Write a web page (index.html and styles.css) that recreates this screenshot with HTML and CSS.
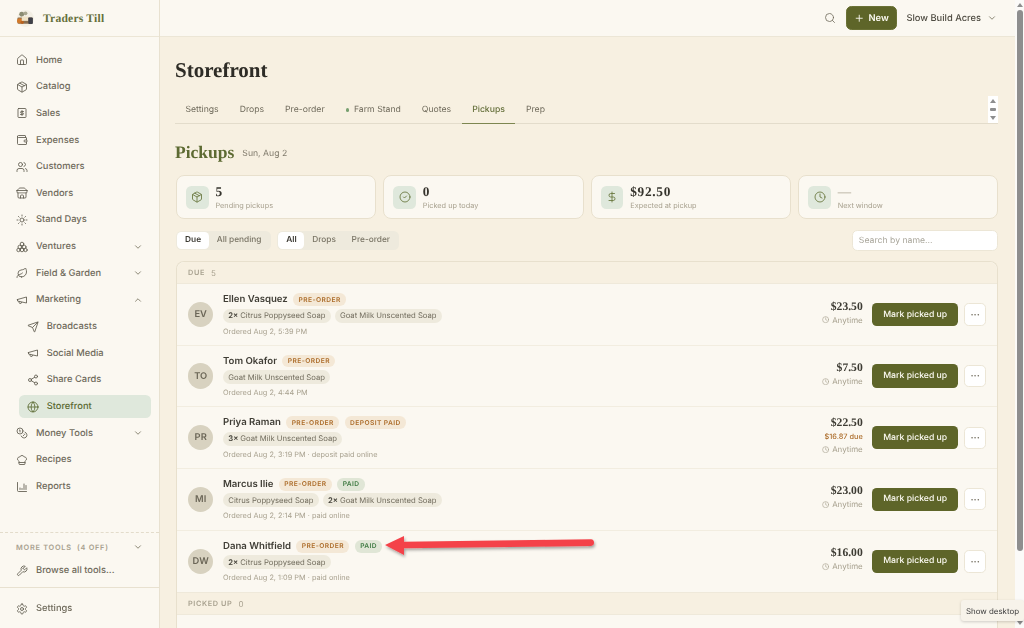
FILE: index.html
```html
<!DOCTYPE html>
<html lang="en">
<head>
<meta charset="utf-8">
<title>Storefront Pickups</title>
<link rel="stylesheet" href="styles.css">
</head>
<body>
<svg class="sprite" xmlns="http://www.w3.org/2000/svg">
<symbol id="i-home" viewBox="0 0 24 24"><path d="M15 21v-8a1 1 0 0 0-1-1h-4a1 1 0 0 0-1 1v8"/><path d="M3 10a2 2 0 0 1 .709-1.528l7-5.999a2 2 0 0 1 2.582 0l7 5.999A2 2 0 0 1 21 10v9a2 2 0 0 1-2 2H5a2 2 0 0 1-2-2z"/></symbol>
<symbol id="i-package" viewBox="0 0 24 24"><path d="M11 21.730a2 2 0 0 0 2 0l7-4A2 2 0 0 0 21 16V8a2 2 0 0 0-1-1.730l-7-4a2 2 0 0 0-2 0l-7 4A2 2 0 0 0 3 8v8a2 2 0 0 0 1 1.730z"/><path d="M12 22V12"/><path d="m3.300 7 8.700 5 8.700-5"/><path d="m7.500 4.270 9 5.150"/></symbol>
<symbol id="i-sales" viewBox="0 0 24 24"><rect x="4" y="3" width="16" height="18" rx="1.500"/><path d="M12 7v10"/><path d="M15 9h-4.500a1.500 1.500 0 0 0 0 3h3a1.500 1.500 0 0 1 0 3H9"/></symbol>
<symbol id="i-wallet" viewBox="0 0 24 24"><path d="M19 7V4a1 1 0 0 0-1-1H5a2 2 0 0 0 0 4h15a1 1 0 0 1 1 1v4h-3a2 2 0 0 0 0 4h3a1 1 0 0 0 1-1v-2a1 1 0 0 0-1-1"/><path d="M3 5v14a2 2 0 0 0 2 2h15a1 1 0 0 0 1-1v-4"/></symbol>
<symbol id="i-users" viewBox="0 0 24 24"><path d="M16 21v-2a4 4 0 0 0-4-4H6a4 4 0 0 0-4 4v2"/><circle cx="9" cy="7" r="4"/><path d="M22 21v-2a4 4 0 0 0-3-3.870"/><path d="M16 3.130a4 4 0 0 1 0 7.750"/></symbol>
<symbol id="i-store" viewBox="0 0 24 24"><path d="m2 7 4.410-4.410A2 2 0 0 1 7.830 2h8.340a2 2 0 0 1 1.420.59L22 7"/><path d="M4 12v8a2 2 0 0 0 2 2h12a2 2 0 0 0 2-2v-8"/><path d="M15 22v-4a2 2 0 0 0-2-2h-2a2 2 0 0 0-2 2v4"/><path d="M2 7h20"/><path d="M22 7v3a2 2 0 0 1-2 2 2.700 2.700 0 0 1-1.590-.63.7.7 0 0 0-.82 0A2.700 2.700 0 0 1 16 12a2.700 2.700 0 0 1-1.590-.63.7.7 0 0 0-.82 0A2.700 2.700 0 0 1 12 12a2.700 2.700 0 0 1-1.590-.63.7.7 0 0 0-.82 0A2.700 2.700 0 0 1 8 12a2.700 2.700 0 0 1-1.590-.63.7.7 0 0 0-.82 0A2.700 2.700 0 0 1 4 12a2 2 0 0 1-2-2V7"/></symbol>
<symbol id="i-sun" viewBox="0 0 24 24"><circle cx="12" cy="12" r="4"/><path d="M12 2v2M12 20v2M4.930 4.930l1.410 1.410M17.660 17.660l1.410 1.410M2 12h2M20 12h2M6.340 17.660l-1.410 1.410M19.070 4.930l-1.410 1.410"/></symbol>
<symbol id="i-grapes" viewBox="0 0 24 24"><circle cx="12" cy="6" r="3.600"/><circle cx="7.500" cy="12" r="3.600"/><circle cx="16.500" cy="12" r="3.600"/><circle cx="5" cy="18" r="3.400"/><circle cx="12" cy="18" r="3.600"/><circle cx="19" cy="18" r="3.400"/></symbol>
<symbol id="i-leaf" viewBox="0 0 24 24"><path d="M11 20A7 7 0 0 1 9.800 6.100C15.500 5 17 4.480 19 2c1 2 2 4.180 2 8 0 5.500-4.780 10-10 10Z"/><path d="M2 21c0-3 1.850-5.360 5.080-6C9.500 14.520 12 13 13 12"/></symbol>
<symbol id="i-mega" viewBox="0 0 24 24"><path d="m3 11 18-5v12L3 14v-3z"/><path d="M11.600 16.800a3 3 0 1 1-5.800-1.600"/></symbol>
<symbol id="i-send" viewBox="0 0 24 24"><path d="M14.536 21.686a.5.5 0 0 0 .937-.024l6.500-19a.496.496 0 0 0-.635-.635l-19 6.500a.5.5 0 0 0-.024.937l7.930 3.180a2 2 0 0 1 1.112 1.110z"/><path d="m21.854 2.147-10.940 10.939"/></symbol>
<symbol id="i-share" viewBox="0 0 24 24"><circle cx="18" cy="5" r="3"/><circle cx="6" cy="12" r="3"/><circle cx="18" cy="19" r="3"/><path d="m8.590 13.510 6.830 3.980M15.410 6.510l-6.820 3.980"/></symbol>
<symbol id="i-globe" viewBox="0 0 24 24"><circle cx="12" cy="12" r="10"/><path d="M12 2a14.500 14.500 0 0 0 0 20 14.500 14.500 0 0 0 0-20"/><path d="M2 12h20"/></symbol>
<symbol id="i-coins" viewBox="0 0 24 24"><circle cx="8" cy="8" r="6"/><path d="M18.090 10.370A6 6 0 1 1 10.340 18"/><path d="M7 6h1v4"/><path d="m16.710 13.880.7.710-2.820 2.820"/></symbol>
<symbol id="i-chef" viewBox="0 0 24 24"><path d="M17 21a1 1 0 0 0 1-1v-5.350c0-.457.316-.844.727-1.041a4 4 0 0 0-2.134-7.589 5 5 0 0 0-9.186 0 4 4 0 0 0-2.134 7.588c.411.198.727.585.727 1.041V20a1 1 0 0 0 1 1Z"/><path d="M6 17h12"/></symbol>
<symbol id="i-chart" viewBox="0 0 24 24"><path d="M3 3v16a2 2 0 0 0 2 2h16"/><path d="M8 17v-3M12 17v-2M16 17V6M20 17V9"/></symbol>
<symbol id="i-wrench" viewBox="0 0 24 24"><path d="M14.700 6.300a1 1 0 0 0 0 1.400l1.600 1.600a1 1 0 0 0 1.400 0l3.770-3.770a6 6 0 0 1-7.940 7.940l-6.910 6.910a2.120 2.120 0 0 1-3-3l6.910-6.910a6 6 0 0 1 7.940-7.940l-3.760 3.760z"/></symbol>
<symbol id="i-gear" viewBox="0 0 24 24"><path d="M12.220 2h-.44a2 2 0 0 0-2 2v.18a2 2 0 0 1-1 1.730l-.43.25a2 2 0 0 1-2 0l-.15-.08a2 2 0 0 0-2.730.73l-.22.38a2 2 0 0 0 .73 2.730l.15.1a2 2 0 0 1 1 1.720v.51a2 2 0 0 1-1 1.740l-.15.09a2 2 0 0 0-.73 2.730l.22.38a2 2 0 0 0 2.730.73l.15-.08a2 2 0 0 1 2 0l.43.25a2 2 0 0 1 1 1.730V20a2 2 0 0 0 2 2h.44a2 2 0 0 0 2-2v-.18a2 2 0 0 1 1-1.730l.43-.25a2 2 0 0 1 2 0l.15.08a2 2 0 0 0 2.730-.73l.22-.39a2 2 0 0 0-.73-2.730l-.15-.08a2 2 0 0 1-1-1.740v-.5a2 2 0 0 1 1-1.740l.15-.09a2 2 0 0 0 .73-2.730l-.22-.38a2 2 0 0 0-2.730-.73l-.15.08a2 2 0 0 1-2 0l-.43-.25a2 2 0 0 1-1-1.730V4a2 2 0 0 0-2-2z"/><circle cx="12" cy="12" r="3"/></symbol>
<symbol id="i-check" viewBox="0 0 24 24"><circle cx="12" cy="12" r="10"/><path d="m9 12 2 2 4-4"/></symbol>
<symbol id="i-clock" viewBox="0 0 24 24"><circle cx="12" cy="12" r="10"/><path d="M12 6v6l4 2"/></symbol>
<symbol id="i-dollar" viewBox="0 0 24 24"><path d="M12 2v20"/><path d="M17 5H9.500a3.500 3.500 0 0 0 0 7h5a3.500 3.500 0 0 1 0 7H6"/></symbol>
<symbol id="i-search" viewBox="0 0 24 24"><circle cx="11" cy="11" r="8"/><path d="m21 21-4.300-4.300"/></symbol>
<symbol id="i-down" viewBox="0 0 24 24"><path d="m6 9 6 6 6-6"/></symbol>
<symbol id="i-up" viewBox="0 0 24 24"><path d="m18 15-6-6-6 6"/></symbol>
<symbol id="i-plus" viewBox="0 0 24 24"><path d="M5 12h14M12 5v14"/></symbol>
</svg>

<div class="app">
  <aside class="sidebar">
    <div class="brand">
      <svg class="brand-logo" viewBox="0 0 20 18" aria-hidden="true">
        <circle cx="10" cy="9" r="9" fill="#f3efe4"/>
        <circle cx="6" cy="4.500" r="2.600" fill="#8b8c72"/>
        <circle cx="10" cy="3.500" r="2" fill="#a8a68e"/>
        <rect x="1.500" y="8" width="16" height="6.500" rx="1" fill="#8a6f50"/>
        <circle cx="3.800" cy="11.500" r="2.800" fill="#d27a2c"/>
        <circle cx="6.500" cy="13" r="1.800" fill="#b9621f"/>
        <rect x="6" y="7" width="7" height="4.500" fill="#f0e3c6"/>
        <rect x="13" y="8" width="4.800" height="6.800" rx="1" fill="#3f4049"/>
      </svg>
      <span class="brand-name">Traders Till</span>
    </div>
    <nav class="nav">
      <a class="nav-item"><svg class="ic"><use href="#i-home"/></svg>Home</a>
      <a class="nav-item"><svg class="ic"><use href="#i-package"/></svg>Catalog</a>
      <a class="nav-item"><svg class="ic"><use href="#i-sales"/></svg>Sales</a>
      <a class="nav-item"><svg class="ic"><use href="#i-wallet"/></svg>Expenses</a>
      <a class="nav-item"><svg class="ic"><use href="#i-users"/></svg>Customers</a>
      <a class="nav-item"><svg class="ic"><use href="#i-store"/></svg>Vendors</a>
      <a class="nav-item"><svg class="ic"><use href="#i-sun"/></svg>Stand Days</a>
      <a class="nav-item"><svg class="ic"><use href="#i-grapes"/></svg>Ventures<svg class="chev"><use href="#i-down"/></svg></a>
      <a class="nav-item"><svg class="ic"><use href="#i-leaf"/></svg>Field &amp; Garden<svg class="chev"><use href="#i-down"/></svg></a>
      <a class="nav-item"><svg class="ic"><use href="#i-mega"/></svg>Marketing<svg class="chev"><use href="#i-up"/></svg></a>
      <a class="nav-item sub"><svg class="ic"><use href="#i-send"/></svg>Broadcasts</a>
      <a class="nav-item sub"><svg class="ic"><use href="#i-mega"/></svg>Social Media</a>
      <a class="nav-item sub"><svg class="ic"><use href="#i-share"/></svg>Share Cards</a>
      <a class="nav-item sub active"><svg class="ic"><use href="#i-globe"/></svg>Storefront</a>
      <a class="nav-item"><svg class="ic"><use href="#i-coins"/></svg>Money Tools<svg class="chev"><use href="#i-down"/></svg></a>
      <a class="nav-item"><svg class="ic"><use href="#i-chef"/></svg>Recipes</a>
      <a class="nav-item"><svg class="ic"><use href="#i-chart"/></svg>Reports</a>
    </nav>
    <div class="more">
      <div class="more-head"><span>MORE TOOLS&nbsp; (4 OFF)</span><svg class="chev"><use href="#i-down"/></svg></div>
      <a class="nav-item"><svg class="ic"><use href="#i-wrench"/></svg>Browse all tools...</a>
    </div>
    <div class="side-foot">
      <a class="nav-item"><svg class="ic"><use href="#i-gear"/></svg>Settings</a>
    </div>
  </aside>

  <div class="column">
    <header class="topbar">
      <svg class="ic search-ic"><use href="#i-search"/></svg>
      <button class="new-btn"><svg class="plus"><use href="#i-plus"/></svg>New</button>
      <div class="org">Slow Build Acres<svg class="chev"><use href="#i-down"/></svg></div>
    </header>
    <main class="main">
      <h1 class="title">Storefront</h1>
      <div class="tabs">
        <a class="tab">Settings</a>
        <a class="tab">Drops</a>
        <a class="tab">Pre-order</a>
        <a class="tab"><i class="dot"></i>Farm Stand</a>
        <a class="tab">Quotes</a>
        <a class="tab active">Pickups</a>
        <a class="tab">Prep</a>
        <div class="mini-scroll"><i class="tri-up"></i><i class="dash"></i><i class="tri-down"></i></div>
      </div>
      <div class="section-head"><h2>Pickups</h2><span>Sun, Aug 2</span></div>
      <div class="stats">
        <div class="stat"><div class="stat-ic"><svg><use href="#i-package"/></svg></div><div><div class="stat-val">5</div><div class="stat-lab">Pending pickups</div></div></div>
        <div class="stat"><div class="stat-ic"><svg><use href="#i-check"/></svg></div><div><div class="stat-val">0</div><div class="stat-lab">Picked up today</div></div></div>
        <div class="stat"><div class="stat-ic"><svg><use href="#i-dollar"/></svg></div><div><div class="stat-val">$92.50</div><div class="stat-lab">Expected at pickup</div></div></div>
        <div class="stat"><div class="stat-ic"><svg><use href="#i-clock"/></svg></div><div><div class="stat-val muted">—</div><div class="stat-lab">Next window</div></div></div>
      </div>
      <div class="filters">
        <div class="seg"><span class="on">Due</span><span>All pending</span></div>
        <div class="seg"><span class="on">All</span><span>Drops</span><span>Pre-order</span></div>
        <input class="search" type="text" placeholder="Search by name...">
      </div>
      <section class="list">
        <div class="list-head"><b>DUE</b><span>5</span></div>

        <article class="row">
          <div class="avatar">EV</div>
          <div class="info">
            <div class="line1"><span class="name">Ellen Vasquez</span><span class="pill pre">PRE-ORDER</span></div>
            <div class="chips"><span class="chip"><b>2×</b> Citrus Poppyseed Soap</span><span class="chip">Goat Milk Unscented Soap</span></div>
            <div class="meta">Ordered Aug 2, 5:39 PM</div>
          </div>
          <div class="price"><div class="amt">$23.50</div><div class="when"><svg><use href="#i-clock"/></svg>Anytime</div></div>
          <button class="mark">Mark picked up</button>
          <button class="more-btn">···</button>
        </article>

        <article class="row">
          <div class="avatar">TO</div>
          <div class="info">
            <div class="line1"><span class="name">Tom Okafor</span><span class="pill pre">PRE-ORDER</span></div>
            <div class="chips"><span class="chip">Goat Milk Unscented Soap</span></div>
            <div class="meta">Ordered Aug 2, 4:44 PM</div>
          </div>
          <div class="price"><div class="amt">$7.50</div><div class="when"><svg><use href="#i-clock"/></svg>Anytime</div></div>
          <button class="mark">Mark picked up</button>
          <button class="more-btn">···</button>
        </article>

        <article class="row">
          <div class="avatar">PR</div>
          <div class="info">
            <div class="line1"><span class="name">Priya Raman</span><span class="pill pre">PRE-ORDER</span><span class="pill pre">DEPOSIT PAID</span></div>
            <div class="chips"><span class="chip"><b>3×</b> Goat Milk Unscented Soap</span></div>
            <div class="meta">Ordered Aug 2, 3:19 PM · deposit paid online</div>
          </div>
          <div class="price"><div class="amt">$22.50</div><div class="due">$16.87 due</div><div class="when"><svg><use href="#i-clock"/></svg>Anytime</div></div>
          <button class="mark">Mark picked up</button>
          <button class="more-btn">···</button>
        </article>

        <article class="row">
          <div class="avatar">MI</div>
          <div class="info">
            <div class="line1"><span class="name">Marcus Ilie</span><span class="pill pre">PRE-ORDER</span><span class="pill paid">PAID</span></div>
            <div class="chips"><span class="chip">Citrus Poppyseed Soap</span><span class="chip"><b>2×</b> Goat Milk Unscented Soap</span></div>
            <div class="meta">Ordered Aug 2, 2:14 PM · paid online</div>
          </div>
          <div class="price"><div class="amt">$23.00</div><div class="when"><svg><use href="#i-clock"/></svg>Anytime</div></div>
          <button class="mark">Mark picked up</button>
          <button class="more-btn">···</button>
        </article>

        <article class="row">
          <div class="avatar">DW</div>
          <div class="info">
            <div class="line1"><span class="name">Dana Whitfield</span><span class="pill pre">PRE-ORDER</span><span class="pill paid">PAID</span></div>
            <div class="chips"><span class="chip"><b>2×</b> Citrus Poppyseed Soap</span></div>
            <div class="meta">Ordered Aug 2, 1:09 PM · paid online</div>
          </div>
          <div class="price"><div class="amt">$16.00</div><div class="when"><svg><use href="#i-clock"/></svg>Anytime</div></div>
          <button class="mark">Mark picked up</button>
          <button class="more-btn">···</button>
        </article>

        <div class="list-head second"><b>PICKED UP</b><span>0</span></div>
        <div class="empty"></div>
      </section>
    </main>
  </div>

  <div class="scrollbar"><i class="tri-up"></i><i class="thumb"></i><i class="tri-down"></i></div>
</div>

<svg class="arrow" viewBox="0 0 240 40" aria-hidden="true">
  <defs><filter id="sh" x="-10%" y="-40%" width="120%" height="200%"><feDropShadow dx="1" dy="2" stdDeviation="1.500" flood-color="#000" flood-opacity=".35"/></filter></defs>
  <path filter="url(#sh)" d="M5 18 L24 9 L24 14.700 L211 12.300 Q214 12.500 214 15.600 Q214 18.800 211 19 L24 21.300 L24 28 Z" fill="#f4434a"/>
</svg>
<div class="tooltip">Show desktop</div>
</body>
</html>
```
FILE: styles.css
```css
* { box-sizing: border-box; }
html, body { margin: 0; height: 100%; overflow: hidden; }
body { font-family: "Inter", "Liberation Sans", sans-serif; font-size: 9.33px; color: #3c3a33; background: #f7f0e1; position: relative; text-rendering: geometricPrecision; filter: blur(.3px); }
.sprite { display: none; }
svg { fill: none; stroke: currentColor; stroke-width: 2; stroke-linecap: round; stroke-linejoin: round; }
.app { display: flex; height: 628px; }

/* sidebar */
.sidebar { width: 160px; flex: none; background: #fbf8f1; border-right: 1px solid #e8e1d0; display: flex; flex-direction: column; height: 100%; }
.brand { height: 37.33px; display: flex; align-items: center; gap: 8px; padding-left: 16px; border-bottom: 1px solid #ece6d6; flex: none; }
.brand-logo { width: 19px; height: 17px; stroke: none; flex: none; }
.brand-name { font-family: "Liberation Serif", serif; font-weight: 700; font-size: 11.6px; color: #66703c; letter-spacing: .2px; }
.nav { padding-top: 9.4px; flex: 1; }
.nav-item { display: flex; align-items: center; height: 26.67px; padding-left: 16px; padding-right: 16px; gap: 8px; color: #6f6a5b; font-size: 9.33px; font-weight: 450; }
.nav-item .ic { width: 12px; height: 12px; flex: none; color: #5f5b4e; stroke-width: 1.7; }
.nav-item .chev { margin-left: auto; }
.chev { width: 10px; height: 10px; color: #77725f; stroke-width: 2; flex: none; }
.nav-item.sub { padding-left: 26.67px; }
.nav-item.sub.active { background: #dfe8dc; color: #5b6a33; border-radius: 5.33px; margin: 1.5px 8px 1.5px 19px; height: 23.67px; padding-left: 7.67px; font-weight: 500; }
.nav-item.sub.active .ic { color: #5b6a33; }
.more { border-top: 1px dashed #e3dccb; padding-top: 7px; height: 55px; flex: none; }
.more-head { display: flex; justify-content: space-between; align-items: center; padding: 0 16px; font-size: 7.33px; font-weight: 600; letter-spacing: .75px; color: #a8a18f; height: 14px; margin-bottom: 3.5px; }
.more .nav-item { height: 26px; }
.side-foot { border-top: 1px solid #e8e1d0; height: 41px; flex: none; padding-top: 7.5px; }

/* top bar */
.column { flex: 1; min-width: 0; display: flex; flex-direction: column; height: 100%; }
.topbar { height: 37.33px; flex: none; background: #fbf8f1; border-bottom: 1px solid #ece6d6; display: flex; align-items: center; justify-content: flex-end; padding-right: 18px; }
.search-ic { width: 12px; height: 12px; color: #6f6a5b; stroke-width: 1.6; margin-right: 10px; }
.new-btn { height: 24px; width: 51px; background: #5e6529; border: 1px solid #6b7236; border-radius: 5.33px; color: #fdfbf3; font: 600 9.33px "Inter", sans-serif; display: flex; align-items: center; justify-content: center; gap: 4px; padding: 0; text-rendering: geometricPrecision; }
.plus { width: 10.5px; height: 10.5px; stroke-width: 2; }
.org { display: flex; align-items: center; gap: 6px; margin-left: 9.5px; color: #4f4c42; font-size: 9.33px; font-weight: 500; }

/* main */
.main { flex: 1; overflow: hidden; padding: 21px 16.67px 0 15px; }
.title { margin: 0; font: 700 21px/24px "Liberation Serif", serif; color: #2e2c26; }
.tabs { margin-top: 12px; height: 30px; border-bottom: 1px solid #e3dccb; display: flex; position: relative; }
.tab { padding: 1px 10.5px 0; height: 30px; display: flex; align-items: center; color: #6f6a5b; font-size: 8.67px; white-space: nowrap; }
.tab.active { color: #66703c; font-weight: 500; box-shadow: inset 0 -1px 0 #7d8650; }
.dot { width: 3.8px; height: 3.8px; border-radius: 50%; background: #78a070; margin-right: 4.5px; }
.mini-scroll { position: absolute; right: 0; top: 2px; bottom: 0; width: 10px; background: #fff; display: flex; flex-direction: column; align-items: center; justify-content: space-between; padding: 3px 0; }
.tri-up { display: block; width: 0; height: 0; border: 3px solid transparent; border-top: 0; border-bottom: 4px solid #8e8e8e; }
.tri-down { display: block; width: 0; height: 0; border: 3px solid transparent; border-bottom: 0; border-top: 4px solid #8e8e8e; }
.dash { display: block; width: 6px; height: 3px; border-radius: 1px; background: #8e8e8e; }
.section-head { margin-top: 17px; height: 22px; display: flex; align-items: center; gap: 8px; }
.section-head h2 { margin: 0; font: 700 17.5px/22px "Liberation Serif", serif; color: #5d6a32; }
.section-head span { font-size: 8.67px; color: #807b6c; padding-top: 3px; }
.stats { margin-top: 12px; display: grid; grid-template-columns: repeat(4, 1fr); gap: 7.25px; padding-left: 1px; }
.stat { height: 44px; background: #fbf8f1; border: 1px solid #e8e0cd; border-radius: 8px; display: flex; align-items: center; gap: 6.8px; padding-left: 9px; }
.stat-ic { width: 22.67px; height: 22.67px; border-radius: 5.33px; background: #dfe8dc; color: #66743a; display: flex; align-items: center; justify-content: center; flex: none; }
.stat-ic svg { width: 12px; height: 12px; stroke-width: 1.7; }
.stat-val { font: 700 13.33px/15px "Liberation Serif", serif; color: #35332c; letter-spacing: .7px; }
.stat-val.muted { color: #a8a18f; font-weight: 400; }
.stat-lab { font-size: 7.33px; line-height: 11px; color: #a8a18f; margin-top: 1px; }
.filters { margin-top: 10.5px; display: flex; gap: 6.5px; align-items: center; padding-left: 1px; height: 21.5px; }
.seg { background: #eeeadd; border-radius: 5.33px; display: flex; padding: 1.3px; height: 19.5px; align-items: center; }
.seg span { padding: 0 7.8px; color: #7a7566; font-size: 8.33px; height: 17px; line-height: 17.6px; font-weight: 450; }
.seg .on { background: #fff; color: #3c3a33; font-weight: 600; border-radius: 4.5px; }
.search { margin-left: auto; width: 146px; height: 21.5px; background: #fff; border: 1px solid #ece6d6; border-radius: 5.33px; padding: 0 5.5px; font: 8.67px "Inter", sans-serif; outline: none; text-rendering: geometricPrecision; }
.search::placeholder { color: #a9a69b; }

/* list */
.list { margin-top: 9.5px; margin-left: 1px; background: #fbf8f1; border: 1px solid #e8e0cd; border-bottom: 0; border-radius: 8px 8px 0 0; }
.list-head { height: 22.4px; background: #f7f0e1; display: flex; align-items: center; gap: 6px; padding-left: 11px; font-size: 7.33px; color: #a8a18f; border-bottom: 1px solid #efe9da; border-radius: 8px 8px 0 0; }
.list-head b { font-weight: 600; letter-spacing: .6px; }
.list-head span { font-size: 8px; }
.list-head.second { height: 23.1px; border-radius: 0; border-top: 1px solid #efe9da; }
.row { height: 61.6px; display: flex; align-items: center; padding: 0 11px; border-bottom: 1px solid #f2ede0; }
.row:nth-of-type(5) { border-bottom: 0; }
.avatar { width: 25.33px; height: 25.33px; border-radius: 50%; background: #d8d2c0; color: #6b6657; font-size: 9.33px; font-weight: 600; display: flex; align-items: center; justify-content: center; flex: none; }
.info { margin-left: 9.67px; flex: 1; min-width: 0; }
.line1 { display: flex; align-items: center; gap: 5.5px; height: 14px; }
.name { font-size: 9.6px; font-weight: 600; color: #3f3d35; white-space: nowrap; }
.pill { height: 12.5px; border-radius: 6.25px; padding: 0 5.33px; font-size: 6.67px; font-weight: 600; letter-spacing: .42px; display: flex; align-items: center; white-space: nowrap; }
.pre { background: #f4e8d6; color: #ad6e2c; }
.paid { background: #e0e6d6; color: #3e7a42; }
.chips { display: flex; gap: 3.8px; margin-top: 2px; height: 14px; }
.chip { background: #eeeadd; border-radius: 7px; padding: 0 5.3px; font-size: 7.7px; color: #716c5d; display: flex; align-items: center; gap: 2px; white-space: nowrap; }
.chip b { font-weight: 600; color: #46443b; }
.meta { font-size: 7.33px; color: #a8a18f; margin-top: 3px; line-height: 11px; white-space: nowrap; }
.price { text-align: right; margin-right: 9.67px; margin-bottom: 4px; flex: none; }
.amt { font: 700 11.6px/14px "Liberation Serif", serif; color: #3d3b33; }
.due { font-size: 7.33px; font-weight: 500; color: #ad6e2c; line-height: 10.5px; margin-top: 1.5px; margin-bottom: 2.25px; }
.when { font-size: 7.9px; color: #a8a18f; line-height: 11px; margin-top: 1px; display: flex; align-items: center; justify-content: flex-end; gap: 3px; }
.when svg { width: 7.33px; height: 7.33px; stroke-width: 2; }
.mark { width: 85.67px; height: 23.5px; background: #5e6529; color: #fdfbf3; border: 0; border-radius: 4.67px; font: 500 8.67px "Inter", sans-serif; padding: 0; flex: none; text-rendering: geometricPrecision; }
.more-btn { margin-left: 6px; width: 22.33px; height: 22.33px; background: #fff; border: 1px solid #ece6d6; border-radius: 4.67px; color: #6f6a5b; font: 700 9.33px/1 "Inter", sans-serif; padding: 0; flex: none; }
.empty { height: 30px; }

/* page scrollbar */
.scrollbar { width: 9px; flex: none; background: #fbfaf8; display: flex; flex-direction: column; align-items: center; padding: 3px 0 3px; position: relative; }
.thumb { display: block; width: 6px; height: 541px; margin-top: 3px; border-radius: 3px; background: #8e8e8e; }
.scrollbar .tri-down { margin-top: auto; }

/* overlays */
.arrow { position: absolute; left: 380px; top: 527px; width: 240px; height: 40px; stroke: none; }
.tooltip { position: absolute; left: 961px; top: 600px; width: 63px; height: 21px; background: #f7f3ea; color: #3b3b3b; border-radius: 3px; box-shadow: 0 1px 3px rgba(0,0,0,.18); font-size: 7.9px; display: flex; align-items: center; justify-content: center; white-space: nowrap; }
```
